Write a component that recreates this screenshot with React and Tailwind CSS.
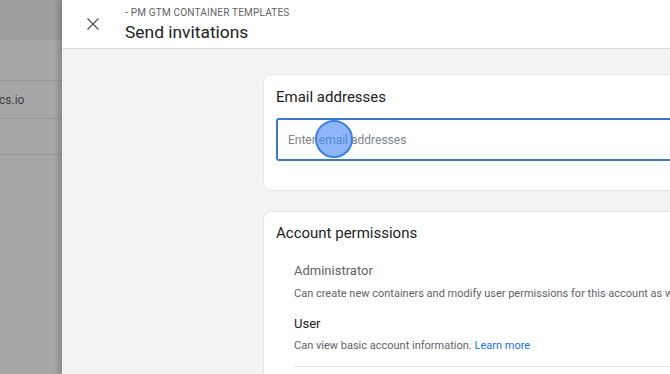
export default function App() {
  return (
    <div
      className="relative flex h-[374px] w-[670px] overflow-hidden bg-white"
      style={{ fontFamily: "Roboto, 'Liberation Sans', sans-serif" }}
    >
      {/* dimmed page behind the panel */}
      <div className="flex w-[62px] shrink-0 flex-col bg-[#a7a7a7]">
        <div className="h-[40px] bg-[#9e9e9e]" />
        <div className="h-[41px] border-b border-[#979797]" />
        <div className="flex h-[38px] items-center border-b border-[#979797] text-[12px] text-[#3c3c3c]">
          <span className="-ml-[1px]">cs.io</span>
        </div>
        <div className="h-[36px] border-b border-[#979797]" />
        <div className="flex-1" />
      </div>

      {/* side panel */}
      <div className="relative flex flex-1 flex-col bg-[#f1f3f4] shadow-[-4px_0_6px_rgba(0,0,0,0.18)]">
        <div className="flex h-[49px] shrink-0 items-center border-b border-[#dadce0] bg-white">
          <button className="ml-[24px] flex h-[14px] w-[14px] items-center justify-center text-[#5f6368]">
            <svg width="14" height="14" viewBox="0 0 14 14" fill="none" stroke="currentColor" strokeWidth="1.5">
              <path d="M1.5 1.5l11 11M12.5 1.5l-11 11" />
            </svg>
          </button>
          <div className="ml-[25px] flex flex-col pt-[2px]">
            <div className="text-[10px] leading-[12px] tracking-[0.2px] text-[#5f6368]">- PM GTM CONTAINER TEMPLATES</div>
            <div className="mt-[2px] text-[17.4px] leading-[22px] text-[#202124]">Send invitations</div>
          </div>
        </div>

        <div className="flex flex-col pl-[201px] pt-[25px]">
          <div className="w-[600px] rounded-[8px] border border-[#e3e5e8] bg-white pl-[12px] pt-[12px] pb-[29px]">
            <div className="text-[15px] leading-[20px] text-[#202124]">Email addresses</div>
            <div className="mt-[11px] flex h-[43px] items-center rounded-[3px] border-2 border-[#3b78c8] pl-[10px] text-[12px] text-[#80868b]">
              Enter email addresses
            </div>
          </div>

          <div className="mt-[20px] w-[600px] rounded-[8px] border border-[#e3e5e8] bg-white pl-[12px] pt-[11px]">
            <div className="text-[15px] leading-[20px] text-[#202124]">Account permissions</div>
            <div className="ml-[18px] mt-[20px] flex flex-col">
              <div className="text-[13px] leading-[16px] text-[#5f6368]">Administrator</div>
              <div className="mt-[8px] whitespace-nowrap text-[11px] leading-[14px] text-[#5f6368]">
                Can create new containers and modify user permissions for this account as well
              </div>
              <div className="mt-[15px] text-[13px] leading-[16px] text-[#202124]">User</div>
              <div className="mt-[7px] text-[11px] leading-[14px] text-[#5f6368]">
                Can view basic account information. <span className="text-[#1a73e8]">Learn more</span>
              </div>
              <div className="mt-[13px] border-b border-[#e3e5e8]" />
              <div className="h-[20px]" />
            </div>
          </div>
        </div>
      </div>

      {/* click highlight */}
      <div className="pointer-events-none absolute left-[315px] top-[120px] h-[38px] w-[38px] rounded-full border-2 border-[#3f7fe4] bg-[rgba(66,133,244,0.6)]" />
    </div>
  );
}
